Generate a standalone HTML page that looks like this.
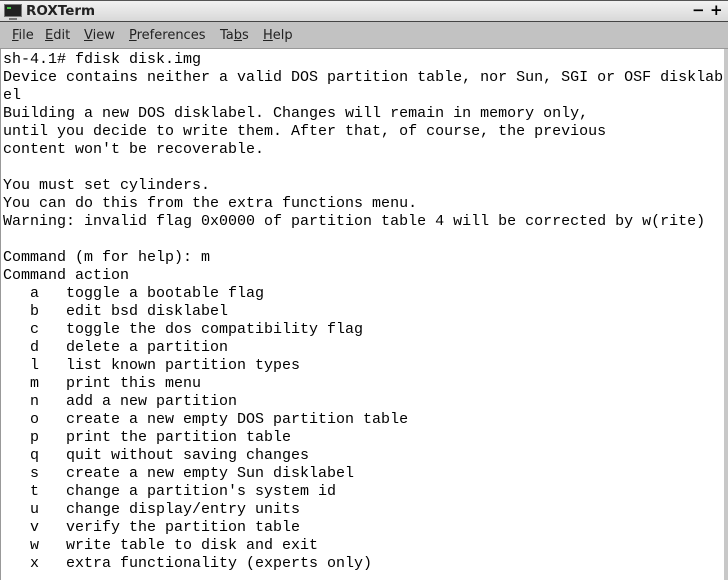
<!DOCTYPE html>
<html><head><style>
body{margin:0;width:728px;height:580px;overflow:hidden;background:#fff;font-family:"DejaVu Sans",sans-serif;position:relative}
#title{position:absolute;left:0;top:0;width:728px;height:22px;background:linear-gradient(#f2f2f2,#d8d8d8);border-top:1px solid #555;box-sizing:border-box;border-bottom:1px solid #444}
#title .t{position:absolute;left:26px;top:2px;font-weight:bold;font-size:13.5px;color:#222}
#icon{position:absolute;left:4px;top:3px;width:16px;height:11px;background:#222;border:1px solid #777}
#icon:before{content:"";position:absolute;left:2px;top:2px;width:4px;height:2px;background:#4c4}
#icon:after{content:"";position:absolute;left:4px;top:13px;width:8px;height:2px;background:#777}
#menu{position:absolute;left:0;top:22px;width:728px;height:27px;background:#c2c2c2;border-bottom:1px solid #999;box-sizing:border-box;font-size:13px;color:#222}
#menu span{position:absolute;top:6px}
#term{position:absolute;left:3px;top:51px;font-family:"Liberation Mono",monospace;font-size:15px;line-height:18px;white-space:pre;color:#000}
#sb{position:absolute;left:724px;top:49px;width:4px;height:531px;background:#c8c8c8}
#lb{position:absolute;left:0;top:49px;width:1px;height:531px;background:#999}
</style></head><body>
<div id="title"><div id="icon"></div><span class="t">ROXTerm</span>
<span style="position:absolute;left:692px;top:0px;font-size:15px;font-weight:bold">−</span>
<span style="position:absolute;left:710px;top:0px;font-size:15px;font-weight:bold">+</span></div>
<div id="menu"><span style="left:12px"><u>F</u>ile</span><span style="left:45px"><u>E</u>dit</span><span style="left:84px"><u>V</u>iew</span><span style="left:129px"><u>P</u>references</span><span style="left:220px">Ta<u>b</u>s</span><span style="left:263px"><u>H</u>elp</span></div>
<div id="lb"></div><div id="sb"></div>
<div id="term">sh-4.1# fdisk disk.img
Device contains neither a valid DOS partition table, nor Sun, SGI or OSF disklab
el
Building a new DOS disklabel. Changes will remain in memory only,
until you decide to write them. After that, of course, the previous
content won't be recoverable.

You must set cylinders.
You can do this from the extra functions menu.
Warning: invalid flag 0x0000 of partition table 4 will be corrected by w(rite)

Command (m for help): m
Command action
   a   toggle a bootable flag
   b   edit bsd disklabel
   c   toggle the dos compatibility flag
   d   delete a partition
   l   list known partition types
   m   print this menu
   n   add a new partition
   o   create a new empty DOS partition table
   p   print the partition table
   q   quit without saving changes
   s   create a new empty Sun disklabel
   t   change a partition's system id
   u   change display/entry units
   v   verify the partition table
   w   write table to disk and exit
   x   extra functionality (experts only)</div>
</body></html>
